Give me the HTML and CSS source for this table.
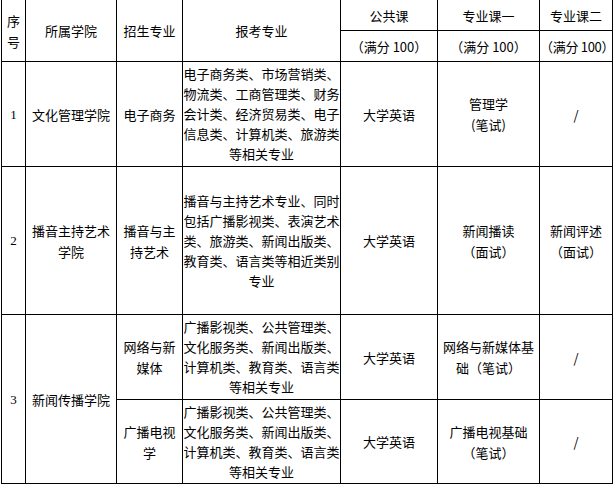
FILE: index.html
```html
<!DOCTYPE html>
<html lang="zh">
<head>
<meta charset="utf-8">
<link rel="stylesheet" href="styles.css">
</head>
<body>
<table class="plan">
  <colgroup>
    <col class="c-no">
    <col class="c-school">
    <col class="c-major">
    <col class="c-req">
    <col class="c-pub">
    <col class="c-pro1">
    <col class="c-pro2">
  </colgroup>
  <tr class="r-h1">
    <td rowspan="2" class="narrow">序号</td>
    <td rowspan="2">所属学院</td>
    <td rowspan="2">招生专业</td>
    <td rowspan="2">报考专业</td>
    <td>公共课</td>
    <td>专业课一</td>
    <td>专业课二</td>
  </tr>
  <tr class="r-h2">
    <td class="score">（满分 100）</td>
    <td class="score">（满分 100）</td>
    <td class="score tight">（满分 100）</td>
  </tr>
  <tr class="r-1">
    <td class="num">1</td>
    <td>文化管理学院</td>
    <td>电子商务</td>
    <td class="req">电子商务类、市场营销类、物流类、工商管理类、财务会计类、经济贸易类、电子信息类、计算机类、旅游类等相关专业</td>
    <td>大学英语</td>
    <td>管理学<br>(笔试)</td>
    <td>/</td>
  </tr>
  <tr class="r-2">
    <td class="num">2</td>
    <td>播音主持艺术学院</td>
    <td>播音与主持艺术</td>
    <td class="req">播音与主持艺术专业、同时包括广播影视类、表演艺术类、旅游类、新闻出版类、教育类、语言类等相近类别专业</td>
    <td>大学英语</td>
    <td>新闻播读<br>（面试）</td>
    <td>新闻评述<br>（面试）</td>
  </tr>
  <tr class="r-3a">
    <td rowspan="2" class="num">3</td>
    <td rowspan="2">新闻传播学院</td>
    <td>网络与新媒体</td>
    <td class="req">广播影视类、公共管理类、文化服务类、新闻出版类、计算机类、教育类、语言类等相关专业</td>
    <td>大学英语</td>
    <td>网络与新媒体基础（笔试）</td>
    <td>/</td>
  </tr>
  <tr class="r-3b">
    <td>广播电视学</td>
    <td class="req">广播影视类、公共管理类、文化服务类、新闻出版类、计算机类、教育类、语言类等相关专业</td>
    <td>大学英语</td>
    <td>广播电视基础<br>（笔试）</td>
    <td>/</td>
  </tr>
</table>
</body>
</html>
```

FILE: styles.css
```css
html, body {
  margin: 0;
  padding: 0;
  background: #ffffff;
}

.plan {
  margin: -1px 0 0 1px;
  width: 611px;
  table-layout: fixed;
  border-collapse: collapse;
  font-family: "Noto Sans CJK SC", "DejaVu Sans", sans-serif;
  font-size: 13px;
  line-height: 21px;
  color: #000000;
}

.c-no { width: 24px; }
.c-school { width: 91px; }
.c-major { width: 66px; }
.c-req { width: 158px; }
.c-pub { width: 97px; }
.c-pro1 { width: 102px; }
.c-pro2 { width: 73px; }

.plan td {
  border: 1px solid #000000;
  padding: 0 2px;
  text-align: center;
  vertical-align: middle;
  overflow: visible;
}

.plan td.narrow {
  padding: 0;
}

.plan td.req {
  padding: 0;
  line-height: 20px;
}

.plan td.num {
  font-family: "Liberation Serif", "DejaVu Serif", serif;
  font-size: 13px;
}

.plan td.score {
  white-space: nowrap;
  padding: 0;
}

.plan td.tight {
  text-align: left;
  letter-spacing: -0.3px;
}

.r-h1 { height: 31px; }
.r-h2 { height: 31px; }
.r-1 { height: 105px; }
.r-2 { height: 148px; }
.r-3a { height: 85px; }
.r-3b { height: 84px; }
```
